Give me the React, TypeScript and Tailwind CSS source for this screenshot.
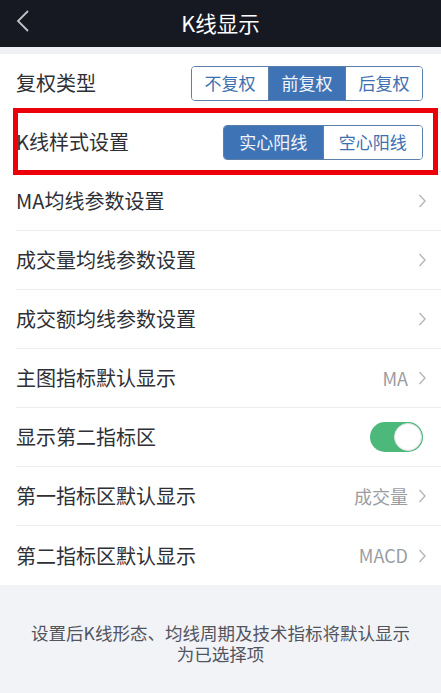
import { useState } from "react";

const FONT = { fontFamily: '"Noto Sans CJK SC", "Noto Sans", sans-serif' };

function Chevron() {
  return (
    <svg width="9" height="16" viewBox="0 0 9 16" className="ml-[10px]">
      <polyline points="1.5,2 7,8 1.5,14" fill="none" stroke="#b4b6bb" strokeWidth="1.4" />
    </svg>
  );
}

function Segmented({ options, active, width }: { options: string[]; active: number; width: string }) {
  return (
    <div className={`mr-[4px] flex h-[35px] ${width} overflow-hidden rounded-[4px] border border-[#5b7fa9]`}>
      {options.map((o, i) => (
        <div
          key={o}
          className={`flex flex-1 items-center justify-center text-[17px] ${
            i === active ? "bg-[#3e74b6] text-[#f2f5fa]" : "bg-white text-[#3c70b0]"
          } ${i > 0 ? "border-l border-[#5b7fa9]" : ""}`}
        >
          {o}
        </div>
      ))}
    </div>
  );
}

function Row({ label, children, last }: { label: string; children?: React.ReactNode; last?: boolean }) {
  return (
    <div
      className="ml-4 flex h-[59px] items-center justify-between border-b border-[#ececef] pr-[14px]"
      style={last ? { borderBottom: "none" } : undefined}
    >
      <span className="text-[20px] text-[#2e3035]">{label}</span>
      <div className="flex items-center">{children}</div>
    </div>
  );
}

function Value({ text }: { text: string }) {
  return (
    <>
      <span className="text-[18px] text-[#9a9ca2]">{text}</span>
      <Chevron />
    </>
  );
}

export default function App() {
  const [on, setOn] = useState(true);

  return (
    <div className="flex h-[693px] w-[441px] flex-col bg-[#f2f3f7]" style={FONT}>
      <div className="relative flex h-[47px] items-center justify-center bg-[#171922]">
        <svg width="14" height="22" viewBox="0 0 14 22" className="absolute left-[16px] top-[10px]">
          <polyline points="12,1 2,11 12,21" fill="none" stroke="#bfc2c9" strokeWidth="1.8" />
        </svg>
        <span className="text-[21.5px] text-white">K线显示</span>
      </div>
      <div className="h-[7px] bg-[#f0f1f4]" />

      <div className="relative bg-white">
        <Row label="复权类型">
          <Segmented options={["不复权", "前复权", "后复权"]} active={1} width="w-[232px]" />
        </Row>
        <Row label="K线样式设置">
          <Segmented options={["实心阳线", "空心阳线"]} active={0} width="w-[200px]" />
        </Row>
        <Row label="MA均线参数设置">
          <Chevron />
        </Row>
        <Row label="成交量均线参数设置">
          <Chevron />
        </Row>
        <Row label="成交额均线参数设置">
          <Chevron />
        </Row>
        <Row label="主图指标默认显示">
          <Value text="MA" />
        </Row>
        <Row label="显示第二指标区">
          <button
            onClick={() => setOn(!on)}
            className={`relative mr-[4px] h-[30px] w-[53px] rounded-full ${on ? "bg-[#4cb87a]" : "bg-[#e4e5e8]"}`}
          >
            <span
              className={`absolute top-[1px] h-[28px] w-[28px] rounded-full border border-[#dfe0e3] bg-white ${
                on ? "right-[1px]" : "left-[1px]"
              }`}
            />
          </button>
        </Row>
        <Row label="第一指标区默认显示">
          <Value text="成交量" />
        </Row>
        <Row label="第二指标区默认显示" last>
          <Value text="MACD" />
        </Row>

        <div className="pointer-events-none absolute left-[13px] top-[54px] h-[67px] w-[425px] border-[5px] border-[#ec0009]" />
      </div>

      <div className="flex flex-1 items-start justify-center px-6 pt-[37px]">
        <p className="text-center text-[17.5px] leading-[21px] text-[#52555d]">
          设置后K线形态、均线周期及技术指标将默认显示
          <br />
          为已选择项
        </p>
      </div>
    </div>
  );
}
